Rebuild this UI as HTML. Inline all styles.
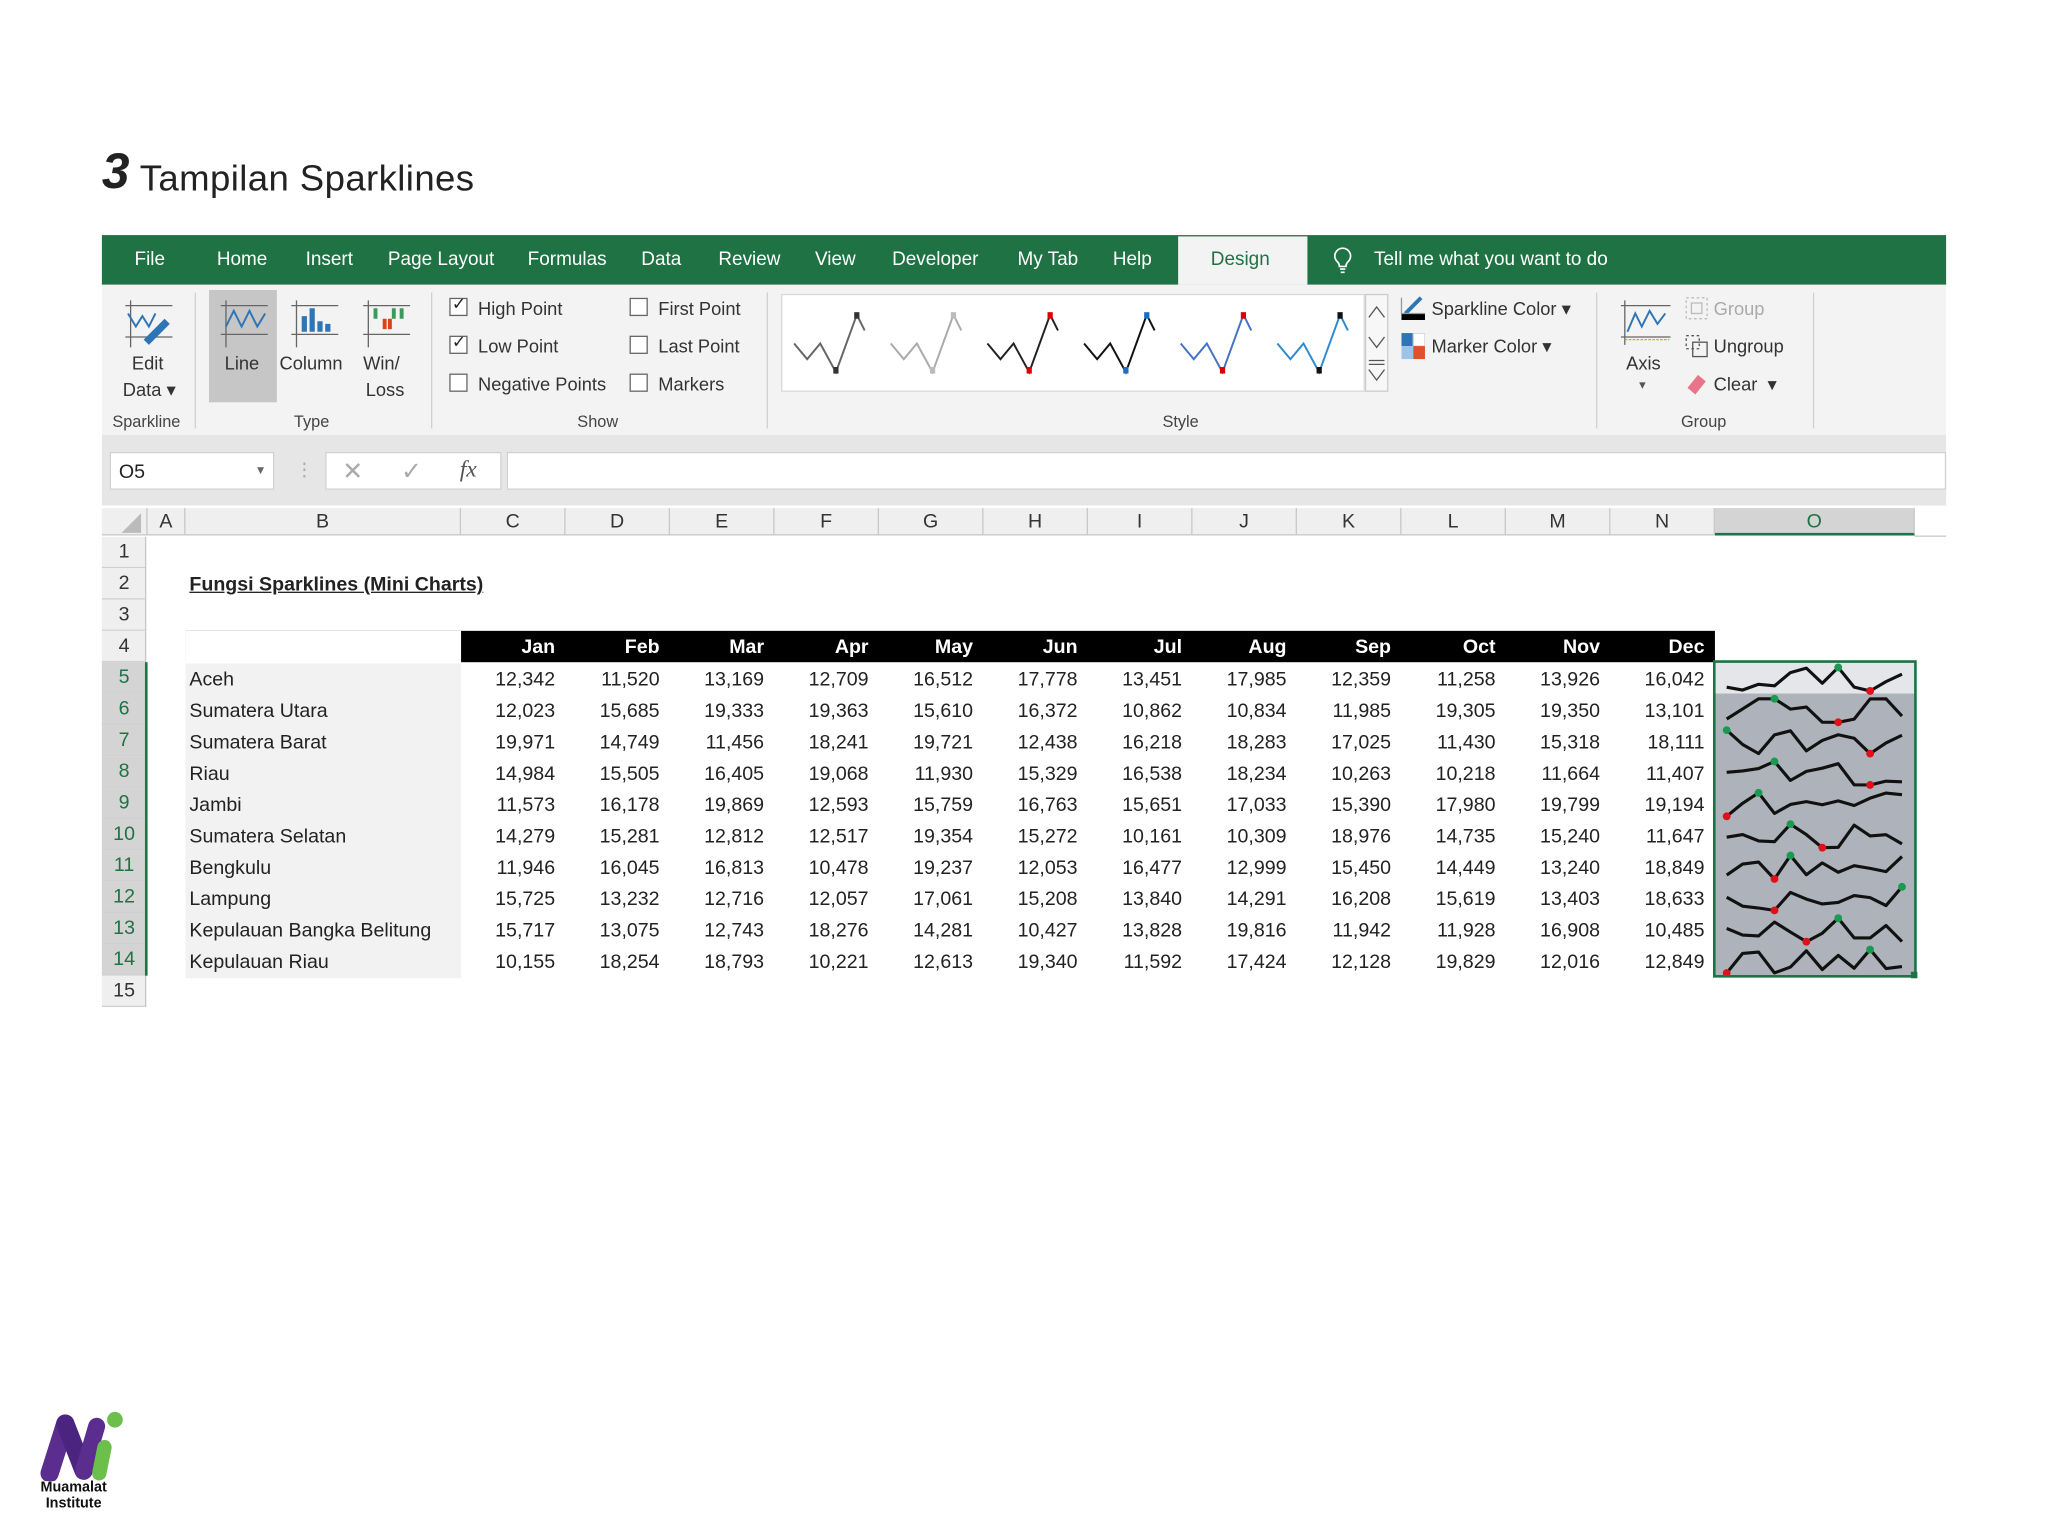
<!DOCTYPE html>
<html><head><meta charset="utf-8">
<style>
*{margin:0;padding:0;box-sizing:border-box}
html,body{width:2048px;height:1536px;overflow:hidden;background:#fff}
#w{position:absolute;left:0;top:0;width:1568px;height:1176px;transform:scale(1.30612);transform-origin:0 0;font-family:"Liberation Sans",sans-serif;color:#222}
.a{position:absolute;white-space:nowrap}
.tab{position:absolute;top:191px;color:#fff;font-size:14.5px}
.rb{font-size:14px;color:#333}
.gl{position:absolute;top:316px;font-size:12.5px;color:#444}
.cb{position:absolute;width:14px;height:14px;border:1px solid #666;background:#fff}
.ch{position:absolute;top:389px;height:21px;font-size:15px;color:#333;text-align:center;line-height:21px;border-right:1px solid #c8c8c8}
.rh{position:absolute;left:78px;width:34px;height:24px;font-size:15px;text-align:center;line-height:24px;color:#333;border-bottom:1px solid #d0d0d0;background:#efefef}
.row{position:absolute;left:142px;height:24px;display:grid;grid-template-columns:211px repeat(12,80px);font-size:15px;line-height:25px}
.row span{text-align:right;padding-right:8px}
.row span:first-child{text-align:left;padding-left:3px;padding-right:0;background:#f2f2f2}
.hd{background:#000;color:#fff;font-weight:bold;top:483px}
.hd span:first-child{background:#fff}
</style></head><body><div id="w">

<div class="a" style="left:78px;top:111px;font-size:38px;font-weight:bold;font-style:italic">3</div>
<div class="a" style="left:107px;top:121px;font-size:28px;letter-spacing:0.3px">Tampilan Sparklines</div>

<div class="a" style="left:78px;top:180px;width:1412px;height:38px;background:#1f7244"></div>
<div class="tab" style="left:103px">File</div>
<div class="tab" style="left:166px">Home</div>
<div class="tab" style="left:234px">Insert</div>
<div class="tab" style="left:297px">Page Layout</div>
<div class="tab" style="left:404px">Formulas</div>
<div class="tab" style="left:491px">Data</div>
<div class="tab" style="left:550px">Review</div>
<div class="tab" style="left:624px">View</div>
<div class="tab" style="left:683px">Developer</div>
<div class="tab" style="left:779px">My Tab</div>
<div class="tab" style="left:852px">Help</div>
<div class="a" style="left:902px;top:181px;width:99px;height:37px;background:#f3f3f3"></div>
<div class="tab" style="left:927px;color:#1f7244">Design</div>
<svg class="a" style="left:1020px;top:188px" width="16" height="22"><path d="M8 2a6 6 0 0 0-4 10.5c1 1 1.5 2 1.5 3.5h5c0-1.5.5-2.5 1.5-3.5A6 6 0 0 0 8 2zM6 18h4M6.5 20.5h3" fill="none" stroke="#fff" stroke-width="1.3"/></svg>
<div class="tab" style="left:1052px">Tell me what you want to do</div>

<div class="a" style="left:78px;top:218px;width:1412px;height:115px;background:#f3f3f3"></div>
<div class="a" style="left:160px;top:222px;width:52px;height:86px;background:#c6c6c6"></div>
<svg class="a" style="left:94px;top:228px" width="42" height="40"><path d="M2 6h36M2 30h36M6 2v36" stroke="#666" fill="none"/><path d="M4 12l6 10 5-8 5 8 5-10" stroke="#2e75b6" fill="none" stroke-width="1.5"/><path d="M16 32l16-16 4 4-16 16z" fill="#2e75b6"/></svg>
<div class="a rb" style="left:101px;top:270px">Edit</div>
<div class="a rb" style="left:94px;top:290px">Data ▾</div>
<svg class="a" style="left:167px;top:228px" width="40" height="40"><path d="M2 6h36M2 28h36M6 2v36" stroke="#666" fill="none"/><path d="M6 22l6-12 6 12 6-12 6 12 6-10" stroke="#2e75b6" fill="none" stroke-width="1.5"/></svg>
<div class="a rb" style="left:172px;top:270px">Line</div>
<svg class="a" style="left:221px;top:228px" width="40" height="40"><path d="M2 6h36M2 28h36M6 2v36" stroke="#666" fill="none"/><path d="M10 14h4v12h-4zM16 8h4v18h-4zM22 18h4v8h-4zM28 20h4v6h-4z" fill="#2e75b6"/></svg>
<div class="a rb" style="left:214px;top:270px">Column</div>
<svg class="a" style="left:276px;top:228px" width="40" height="40"><path d="M2 6h36M2 28h36M6 2v36" stroke="#666" fill="none"/><path d="M10 8h3v8h-3zM24 8h3v8h-3zM30 8h3v8h-3z" fill="#3a9a5a"/><path d="M17 16h3v8h-3zM21 16h3v8h-3z" fill="#d9441a"/></svg>
<div class="a rb" style="left:278px;top:270px">Win/</div>
<div class="a rb" style="left:280px;top:290px">Loss</div>
<div class="gl" style="left:86px">Sparkline</div>
<div class="gl" style="left:225px">Type</div>
<div class="a" style="left:149px;top:224px;width:1px;height:104px;background:#d0d0d0"></div>
<div class="a" style="left:330px;top:224px;width:1px;height:104px;background:#d0d0d0"></div>

<div class="cb" style="left:344px;top:228px"></div><div class="a" style="left:346px;top:225px;font-size:13px">✓</div>
<div class="a rb" style="left:366px;top:228px">High Point</div>
<div class="cb" style="left:344px;top:257px"></div><div class="a" style="left:346px;top:254px;font-size:13px">✓</div>
<div class="a rb" style="left:366px;top:257px">Low Point</div>
<div class="cb" style="left:344px;top:286px"></div>
<div class="a rb" style="left:366px;top:286px">Negative Points</div>
<div class="cb" style="left:482px;top:228px"></div><div class="a rb" style="left:504px;top:228px">First Point</div>
<div class="cb" style="left:482px;top:257px"></div><div class="a rb" style="left:504px;top:257px">Last Point</div>
<div class="cb" style="left:482px;top:286px"></div><div class="a rb" style="left:504px;top:286px">Markers</div>
<div class="gl" style="left:442px">Show</div>
<div class="a" style="left:587px;top:224px;width:1px;height:104px;background:#d0d0d0"></div>

<div class="a" style="left:598px;top:225px;width:447px;height:75px;background:#fff;border:1px solid #d8d8d8"></div>
<svg class="a" style="left:598px;top:225px" width="447" height="75">
<g fill="none" stroke-width="1.5">
<path d="M10 38l10 12 10-12 12 22 16-44 6 12" stroke="#666"/>
<path d="M84 38l10 12 10-12 12 22 16-44 6 12" stroke="#aaa"/>
<path d="M158 38l10 12 10-12 12 22 16-44 6 12" stroke="#222"/>
<path d="M232 38l10 12 10-12 12 22 16-44 6 12" stroke="#111"/>
<path d="M306 38l10 12 10-12 12 22 16-44 6 12" stroke="#4472c4"/>
<path d="M380 38l10 12 10-12 12 22 16-44 6 12" stroke="#2e8bd0"/>
</g>
<g><rect x="40" y="56" width="4" height="5" fill="#333"/><rect x="56" y="14" width="4" height="5" fill="#333"/>
<rect x="114" y="56" width="4" height="5" fill="#bbb"/><rect x="130" y="14" width="4" height="5" fill="#bbb"/>
<rect x="188" y="56" width="4" height="5" fill="#d00"/><rect x="204" y="14" width="4" height="5" fill="#d00"/>
<rect x="262" y="56" width="4" height="5" fill="#1a70c0"/><rect x="278" y="14" width="4" height="5" fill="#1a70c0"/>
<rect x="336" y="56" width="4" height="5" fill="#d00"/><rect x="352" y="14" width="4" height="5" fill="#d00"/>
<rect x="410" y="56" width="4" height="5" fill="#111"/><rect x="426" y="14" width="4" height="5" fill="#111"/></g>
</svg>
<div class="a" style="left:1045px;top:225px;width:18px;height:75px;border:1px solid #ccc;background:#f7f7f7"></div>
<svg class="a" style="left:1045px;top:225px" width="18" height="75" fill="none" stroke="#555"><path d="M3 18l6-8 6 8M3 33l6 8 6-8M3 58l6 8 6-8M3 51h12M3 54h12"/></svg>
<div class="gl" style="left:890px">Style</div>

<svg class="a" style="left:1072px;top:226px" width="20" height="20"><path d="M4 14L16 2" stroke="#2e75b6" stroke-width="3"/><rect x="1" y="14" width="18" height="5" fill="#000"/><path d="M1 2v12h18" stroke="#999" fill="none"/></svg>
<div class="a rb" style="left:1096px;top:228px">Sparkline Color ▾</div>
<svg class="a" style="left:1073px;top:255px" width="18" height="20"><rect x="0" y="0" width="9" height="10" fill="#2e75b6"/><rect x="9" y="0" width="9" height="10" fill="#fff" stroke="#ccc"/><rect x="0" y="10" width="9" height="10" fill="#9dc3e6"/><rect x="9" y="10" width="9" height="10" fill="#e0502a"/></svg>
<div class="a rb" style="left:1096px;top:257px">Marker Color ▾</div>
<div class="a" style="left:1222px;top:224px;width:1px;height:104px;background:#d0d0d0"></div>
<svg class="a" style="left:1240px;top:228px" width="40" height="40"><path d="M1 6h38M1 30h38M4 2v34" stroke="#666" fill="none"/><path d="M6 26l6-14 5 10 6-12 6 10 6-8" stroke="#2e75b6" fill="none" stroke-width="1.5"/><path d="M4 32h34" stroke="#e3a020" stroke-dasharray="2 1"/></svg>
<div class="a rb" style="left:1245px;top:270px">Axis</div>
<div class="a" style="left:1255px;top:290px;font-size:10px;color:#555">▾</div>
<svg class="a" style="left:1290px;top:227px" width="18" height="18" fill="none" stroke="#bbb"><rect x="1" y="1" width="16" height="16" stroke-dasharray="2 2"/><rect x="5" y="5" width="8" height="8"/></svg>
<div class="a rb" style="left:1312px;top:228px;color:#aaa">Group</div>
<svg class="a" style="left:1290px;top:256px" width="18" height="18" fill="none" stroke="#555"><rect x="1" y="1" width="10" height="10" stroke-dasharray="2 2"/><rect x="6" y="6" width="11" height="11"/></svg>
<div class="a rb" style="left:1312px;top:257px">Ungroup</div>
<svg class="a" style="left:1290px;top:285px" width="18" height="18"><path d="M2 12l8-10 6 5-8 10z" fill="#e8748a"/></svg>
<div class="a rb" style="left:1312px;top:286px">Clear &nbsp;▾</div>
<div class="gl" style="left:1287px">Group</div>
<div class="a" style="left:1388px;top:224px;width:1px;height:104px;background:#d0d0d0"></div>

<div class="a" style="left:78px;top:333px;width:1412px;height:55px;background:#e6e6e6"></div>
<div class="a" style="left:84px;top:346px;width:126px;height:29px;background:#fff;border:1px solid #d0d0d0"></div>
<div class="a" style="left:91px;top:353px;font-size:15px">O5</div>
<div class="a" style="left:195px;top:355px;font-size:9px;color:#666">▼</div>
<div class="a" style="left:226px;top:351px;font-size:14px;color:#aaa">⋮</div>
<div class="a" style="left:249px;top:346px;width:135px;height:29px;background:#fff;border:1px solid #d0d0d0"></div>
<div class="a" style="left:262px;top:350px;font-size:19px;color:#aaa">✕</div>
<div class="a" style="left:307px;top:350px;font-size:19px;color:#aaa">✓</div>
<div class="a" style="left:352px;top:349px;font-size:18px;font-style:italic;font-family:'Liberation Serif',serif;color:#555">fx</div>
<div class="a" style="left:388px;top:346px;width:1102px;height:29px;background:#fff;border:1px solid #d0d0d0"></div>

<div class="a" style="left:78px;top:387px;width:1412px;height:24px;background:#fff"></div>
<div class="a" style="left:78px;top:389px;width:1388px;height:21px;background:#efefef;border-bottom:1px solid #c8c8c8"></div>
<svg class="a" style="left:90px;top:391px" width="20" height="18"><path d="M18 2v15H3z" fill="#bbb"/></svg>
<div class="ch" style="left:112px;width:30px;border-left:1px solid #c8c8c8">A</div>
<div class="ch" style="left:142px;width:211px">B</div>
<div class="ch" style="left:353px;width:80px">C</div>
<div class="ch" style="left:433px;width:80px">D</div>
<div class="ch" style="left:513px;width:80px">E</div>
<div class="ch" style="left:593px;width:80px">F</div>
<div class="ch" style="left:673px;width:80px">G</div>
<div class="ch" style="left:753px;width:80px">H</div>
<div class="ch" style="left:833px;width:80px">I</div>
<div class="ch" style="left:913px;width:80px">J</div>
<div class="ch" style="left:993px;width:80px">K</div>
<div class="ch" style="left:1073px;width:80px">L</div>
<div class="ch" style="left:1153px;width:80px">M</div>
<div class="ch" style="left:1233px;width:80px">N</div>
<div class="ch" style="left:1313px;width:153px;background:#d4d4d4;color:#1f7244;border-bottom:2px solid #1f7244">O</div>
<div class="a" style="left:1466px;top:410px;width:24px;height:1px;background:#c8c8c8"></div>

<div class="rh" style="top:411px">1</div>
<div class="rh" style="top:435px">2</div>
<div class="rh" style="top:459px">3</div>
<div class="rh" style="top:483px">4</div>
<div class="rh" style="top:507px;background:#d4d4d4;color:#1f7244">5</div>
<div class="rh" style="top:531px;background:#d4d4d4;color:#1f7244">6</div>
<div class="rh" style="top:555px;background:#d4d4d4;color:#1f7244">7</div>
<div class="rh" style="top:579px;background:#d4d4d4;color:#1f7244">8</div>
<div class="rh" style="top:603px;background:#d4d4d4;color:#1f7244">9</div>
<div class="rh" style="top:627px;background:#d4d4d4;color:#1f7244">10</div>
<div class="rh" style="top:651px;background:#d4d4d4;color:#1f7244">11</div>
<div class="rh" style="top:675px;background:#d4d4d4;color:#1f7244">12</div>
<div class="rh" style="top:699px;background:#d4d4d4;color:#1f7244">13</div>
<div class="rh" style="top:723px;background:#d4d4d4;color:#1f7244">14</div>
<div class="rh" style="top:747px">15</div>
<div class="a" style="left:111px;top:411px;width:1px;height:360px;background:#c8c8c8"></div>
<div class="a" style="left:111px;top:507px;width:2px;height:240px;background:#1f7244"></div>

<div class="a" style="left:145px;top:439px;font-size:15px;font-weight:bold;text-decoration:underline">Fungsi Sparklines (Mini Charts)</div>

<div class="row hd"><span></span><span>Jan</span><span>Feb</span><span>Mar</span><span>Apr</span><span>May</span><span>Jun</span><span>Jul</span><span>Aug</span><span>Sep</span><span>Oct</span><span>Nov</span><span>Dec</span></div>
<div class="row" style="top:508px"><span>Aceh</span><span>12,342</span><span>11,520</span><span>13,169</span><span>12,709</span><span>16,512</span><span>17,778</span><span>13,451</span><span>17,985</span><span>12,359</span><span>11,258</span><span>13,926</span><span>16,042</span></div>
<div class="row" style="top:532px"><span>Sumatera Utara</span><span>12,023</span><span>15,685</span><span>19,333</span><span>19,363</span><span>15,610</span><span>16,372</span><span>10,862</span><span>10,834</span><span>11,985</span><span>19,305</span><span>19,350</span><span>13,101</span></div>
<div class="row" style="top:556px"><span>Sumatera Barat</span><span>19,971</span><span>14,749</span><span>11,456</span><span>18,241</span><span>19,721</span><span>12,438</span><span>16,218</span><span>18,283</span><span>17,025</span><span>11,430</span><span>15,318</span><span>18,111</span></div>
<div class="row" style="top:580px"><span>Riau</span><span>14,984</span><span>15,505</span><span>16,405</span><span>19,068</span><span>11,930</span><span>15,329</span><span>16,538</span><span>18,234</span><span>10,263</span><span>10,218</span><span>11,664</span><span>11,407</span></div>
<div class="row" style="top:604px"><span>Jambi</span><span>11,573</span><span>16,178</span><span>19,869</span><span>12,593</span><span>15,759</span><span>16,763</span><span>15,651</span><span>17,033</span><span>15,390</span><span>17,980</span><span>19,799</span><span>19,194</span></div>
<div class="row" style="top:628px"><span>Sumatera Selatan</span><span>14,279</span><span>15,281</span><span>12,812</span><span>12,517</span><span>19,354</span><span>15,272</span><span>10,161</span><span>10,309</span><span>18,976</span><span>14,735</span><span>15,240</span><span>11,647</span></div>
<div class="row" style="top:652px"><span>Bengkulu</span><span>11,946</span><span>16,045</span><span>16,813</span><span>10,478</span><span>19,237</span><span>12,053</span><span>16,477</span><span>12,999</span><span>15,450</span><span>14,449</span><span>13,240</span><span>18,849</span></div>
<div class="row" style="top:676px"><span>Lampung</span><span>15,725</span><span>13,232</span><span>12,716</span><span>12,057</span><span>17,061</span><span>15,208</span><span>13,840</span><span>14,291</span><span>16,208</span><span>15,619</span><span>13,403</span><span>18,633</span></div>
<div class="row" style="top:700px"><span>Kepulauan Bangka Belitung</span><span>15,717</span><span>13,075</span><span>12,743</span><span>18,276</span><span>14,281</span><span>10,427</span><span>13,828</span><span>19,816</span><span>11,942</span><span>11,928</span><span>16,908</span><span>10,485</span></div>
<div class="row" style="top:724px"><span>Kepulauan Riau</span><span>10,155</span><span>18,254</span><span>18,793</span><span>10,221</span><span>12,613</span><span>19,340</span><span>11,592</span><span>17,424</span><span>12,128</span><span>19,829</span><span>12,016</span><span>12,849</span></div>

<svg id="sp" class="a" style="left:1311px;top:505px" width="160" height="246"></svg>

<svg class="a" style="left:28px;top:1078px" width="70" height="56">
<path d="M10 50L22 12" stroke="#5b2d8e" stroke-width="14" stroke-linecap="round"/>
<path d="M22 12L36 48" stroke="#4b2480" stroke-width="14" stroke-linecap="round"/>
<path d="M36 48L46 14" stroke="#5b2d8e" stroke-width="13" stroke-linecap="round"/>
<path d="M52 30L48 50" stroke="#6cbf4a" stroke-width="11" stroke-linecap="round"/>
<circle cx="60" cy="9" r="6" fill="#6cbf4a"/>
</svg>
<div class="a" style="left:31px;top:1133px;font-size:11px;font-weight:bold;line-height:12px;text-align:center;color:#111">Muamalat<br>Institute</div>

</div>
<script>
var d=[[12342,11520,13169,12709,16512,17778,13451,17985,12359,11258,13926,16042],
[12023,15685,19333,19363,15610,16372,10862,10834,11985,19305,19350,13101],
[19971,14749,11456,18241,19721,12438,16218,18283,17025,11430,15318,18111],
[14984,15505,16405,19068,11930,15329,16538,18234,10263,10218,11664,11407],
[11573,16178,19869,12593,15759,16763,15651,17033,15390,17980,19799,19194],
[14279,15281,12812,12517,19354,15272,10161,10309,18976,14735,15240,11647],
[11946,16045,16813,10478,19237,12053,16477,12999,15450,14449,13240,18849],
[15725,13232,12716,12057,17061,15208,13840,14291,16208,15619,13403,18633],
[15717,13075,12743,18276,14281,10427,13828,19816,11942,11928,16908,10485],
[10155,18254,18793,10221,12613,19340,11592,17424,12128,19829,12016,12849]];
var s='<rect x="2" y="2" width="153" height="240" fill="#aeb2ba"/><rect x="2" y="2" width="153" height="24" fill="#e4e6ea"/>';
d.forEach(function(r,i){var mn=Math.min.apply(0,r),mx=Math.max.apply(0,r),t=2+i*24;
var p=r.map(function(v,j){return [11+j*12.2,t+22-(v-mn)/(mx-mn)*18]});
s+='<polyline fill="none" stroke="#111" stroke-width="2.4" stroke-linejoin="round" points="'+p.map(function(q){return q.join(',')}).join(' ')+'"/>';
var hi=r.indexOf(mx),lo=r.indexOf(mn);
s+='<circle cx="'+p[hi][0]+'" cy="'+p[hi][1]+'" r="3" fill="#1a9a50"/><circle cx="'+p[lo][0]+'" cy="'+p[lo][1]+'" r="3" fill="#e0101a"/>';});
s+='<rect x="1.5" y="1.5" width="154" height="241" fill="none" stroke="#1f7244" stroke-width="2"/><rect x="152" y="239" width="5" height="5" fill="#1f7244"/>';
document.getElementById('sp').innerHTML=s;
</script>
</body></html>
